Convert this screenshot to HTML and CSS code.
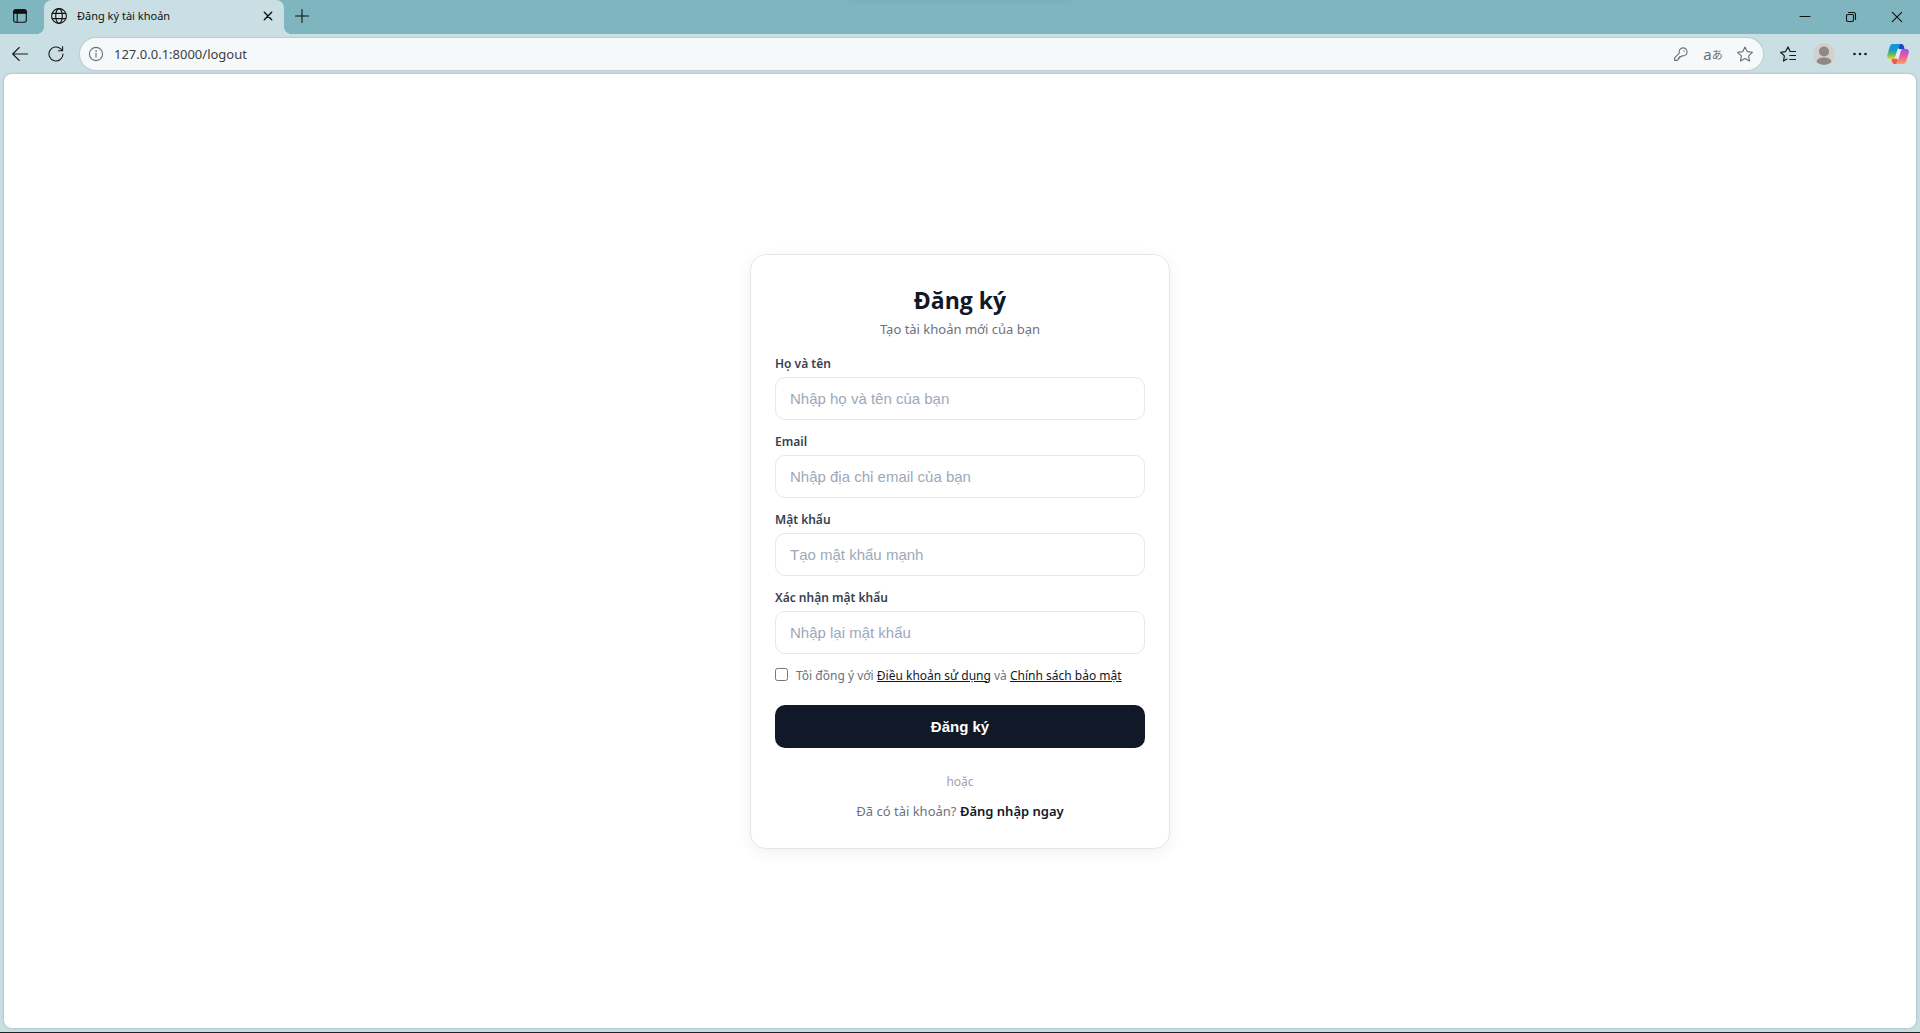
FILE: index.html
```html
<!DOCTYPE html>
<html lang="vi">
<head>
<meta charset="utf-8">
<meta name="viewport" content="width=device-width, initial-scale=1">
<title>Đăng ký tài khoản</title>
<link rel="stylesheet" href="styles.css">
</head>
<body>
<div class="browser">
  <header class="tab-strip">
    <button class="tab-actions" type="button" aria-label="Tab actions">
      <svg class="icon" viewBox="0 0 16 16"><rect x="1.7" y="1.7" width="12.6" height="12.6" rx="2.2"/><path d="M1.7 5.2V3.9a2.2 2.2 0 0 1 2.2-2.2h8.200a2.200 2.200 0 0 1 2.200 2.200v1.300z" fill="currentColor"/><path d="M5.200 5v9"/></svg>
    </button>
    <div class="tab">
      <svg class="icon" viewBox="0 0 16 16"><circle cx="8" cy="8" r="7.400"/><ellipse cx="8" cy="8" rx="3.300" ry="7.400"/><path d="M1.200 5.400h13.600M1.200 10.600h13.600"/></svg>
      <span class="tab-title">Đăng ký tài khoản</span>
      <button class="tab-close" type="button" aria-label="Close tab">
        <svg class="icon" viewBox="0 0 16 16"><path d="M4.300 4.300l7.400 7.400M11.700 4.300l-7.400 7.400" stroke-width="1.400"/></svg>
      </button>
    </div>
    <button class="tool" type="button" aria-label="New tab">
      <svg class="icon" viewBox="0 0 16 16"><path d="M8 1.500v13M1.500 8h13"/></svg>
    </button>
    <div class="window-controls">
      <button class="window-button" type="button" aria-label="Minimize"><svg class="icon" viewBox="0 0 16 16"><path d="M3 7.500h10"/></svg></button>
      <button class="window-button" type="button" aria-label="Restore"><svg class="icon" viewBox="0 0 16 16"><rect x="3.500" y="5.500" width="7" height="7" rx="1.200"/><path d="M5.500 3.500h5a2 2 0 0 1 2 2v5"/></svg></button>
      <button class="window-button" type="button" aria-label="Close"><svg class="icon" viewBox="0 0 16 16"><path d="M3.300 3.300l9.400 9.400M12.700 3.300l-9.400 9.400"/></svg></button>
    </div>
  </header>
  <nav class="toolbar">
    <button class="tool" type="button" aria-label="Back"><svg class="icon" viewBox="0 0 16 16"><path d="M15.500 8H.7M7.300 1.500L.7 8l6.600 6.500"/></svg></button>
    <button class="tool" type="button" aria-label="Refresh"><svg class="icon" viewBox="0 0 16 16"><path d="M15 8a7 7 0 1 1-2.200-5.100L14.600 4.600M14.600.6v4.200h-4.200"/></svg></button>
    <div class="address">
      <svg class="icon muted" viewBox="0 0 16 16"><circle cx="8" cy="8" r="6.600"/><path d="M8 7.200v3.900"/><circle cx="8" cy="5" r=".5" fill="currentColor" stroke-width=".5"/></svg>
      <input class="url" type="text" value="127.0.0.1:8000/logout" aria-label="Address">
      <button class="tool muted" type="button" aria-label="Passwords"><svg class="icon" viewBox="0 0 16 16"><path d="M6.300 7.100A4 4 0 1 1 9 9.700l-.9.900H6.700v1.500H5.300v1.300l-1 1H1.600v-2.500z"/><circle cx="11" cy="5" r=".7" fill="currentColor" stroke="none"/></svg></button>
      <button class="tool muted translate" type="button" aria-label="Translate"><span class="latin">a</span><span class="kana">あ</span></button>
      <button class="tool muted" type="button" aria-label="Add to favorites"><svg class="icon" viewBox="0 0 16 16"><path d="M8 .9l2.200 4.700 5.200.7-3.800 3.600.9 5.200L8 12.600l-4.500 2.500.9-5.200L.6 6.300l5.200-.7z"/></svg></button>
    </div>
    <button class="tool" type="button" aria-label="Favorites"><svg class="icon" viewBox="0 0 16 16"><path d="M15.500 5.500h-5.300L8 .9 5.600 5.600l-5 .7 3.800 3.600-.9 5.200L7 13M9.800 9.500h5.700M9.800 13.500h5.700" stroke-width="1.200"/></svg></button>
    <button class="tool" type="button" aria-label="Profile"><svg class="avatar" viewBox="0 0 22 22"><circle cx="11" cy="11" r="11" fill="#d3d0ce"/><circle cx="11" cy="8.500" r="5.100" fill="#8f8986"/><path d="M3.500 19c.5-3.300 3.500-4.500 7.500-4.500s7 1.200 7.500 4.500A11 11 0 0 1 3.500 19z" fill="#8f8986"/></svg></button>
    <button class="tool" type="button" aria-label="Settings and more"><svg class="icon" viewBox="0 0 16 16"><g fill="currentColor" stroke="none"><circle cx="2.500" cy="8" r="1.300"/><circle cx="8" cy="8" r="1.300"/><circle cx="13.500" cy="8" r="1.300"/></g></svg></button>
    <button class="tool copilot" type="button" aria-label="Copilot">
      <svg class="avatar" viewBox="0 0 22 22">
        <defs>
          <linearGradient id="cool" x1="0" y1="0" x2="0" y2="1"><stop offset="0" stop-color="#1590e8"/><stop offset=".4" stop-color="#149cc8"/><stop offset=".7" stop-color="#62bd63"/><stop offset="1" stop-color="#f2d51c"/></linearGradient>
          <linearGradient id="warm" x1="0" y1="0" x2="0" y2="1"><stop offset="0" stop-color="#a64cf0"/><stop offset=".5" stop-color="#ee5b9b"/><stop offset="1" stop-color="#ffa35f"/></linearGradient>
        </defs>
        <path d="M10 1h4.500q1.700 0 2.200 1.700L17.700 6.500h-5.700z" fill="#1749c4"/>
        <path d="M12 21H7.500q-1.700 0-2.200-1.700L4.300 15.500H10z" fill="#f15a3b"/>
        <path d="M5.500 1h6.300q1.400 0 .9 1.500Q11.200 4 10.500 6.500L8.600 13Q7.800 16 5.500 16H3Q-.5 16 .3 12L3 3Q3.600 1 5.500 1z" fill="url(#cool)"/>
        <path d="M16.500 21h-6.300q-1.400 0-.9-1.500Q10.800 18 11.500 15.500L13.400 9Q14.200 6 16.500 6H19q3.500 0 2.700 4L19 19q-.6 2-2.500 2z" fill="url(#warm)"/>
        <path d="M10.800 6.200h4.100q-1 .8-1.500 2.800L11.600 15.500h-4.500q1-.5 1.500-2.500z" fill="#e3ecf3"/>
      </svg>
    </button>
  </nav>
  <main class="page">
    <form class="card">
      <h1 class="heading">Đăng ký</h1>
      <p class="subtitle">Tạo tài khoản mới của bạn</p>
      <div class="field">
        <label class="label" for="name">Họ và tên</label>
        <input class="input" id="name" type="text" placeholder="Nhập họ và tên của bạn">
      </div>
      <div class="field">
        <label class="label" for="email">Email</label>
        <input class="input" id="email" type="email" placeholder="Nhập địa chỉ email của bạn">
      </div>
      <div class="field">
        <label class="label" for="password">Mật khẩu</label>
        <input class="input" id="password" type="password" placeholder="Tạo mật khẩu mạnh">
      </div>
      <div class="field">
        <label class="label" for="confirm">Xác nhận mật khẩu</label>
        <input class="input" id="confirm" type="password" placeholder="Nhập lại mật khẩu">
      </div>
      <div class="terms">
        <input class="checkbox" id="terms" type="checkbox">
        <label for="terms">Tôi đồng ý với <a class="terms-link" href="#terms-of-use">Điều khoản sử dụng</a> và <a class="terms-link" href="#privacy">Chính sách bảo mật</a></label>
      </div>
      <button class="submit" type="submit">Đăng ký</button>
      <p class="divider">hoặc</p>
      <p class="login">Đã có tài khoản? <a class="login-link" href="#login">Đăng nhập ngay</a></p>
    </form>
  </main>
</div>
</body>
</html>
```

FILE: styles.css
```css
*,
*::before,
*::after {
  box-sizing: border-box;
}

body {
  margin: 0;
  font-family: "Noto Sans", "Open Sans", sans-serif;
  font-size: 13px;
  line-height: 18px;
  color: #111827;
}

button,
input {
  margin: 0;
  padding: 0;
  border: 0;
  background: none;
  font: inherit;
  color: inherit;
}

/* Browser frame */

.browser {
  display: flex;
  flex-direction: column;
  min-height: 100vh;
  background: #c9dfe3;
  border-bottom: 1px solid #1c2426;
}

.icon {
  flex: none;
  width: 16px;
  height: 16px;
  fill: none;
  stroke: currentColor;
  stroke-width: 1.1;
  stroke-linecap: round;
  stroke-linejoin: round;
}

.tab-strip {
  position: relative;
  display: flex;
  align-items: stretch;
  height: 34px;
  background: #7eb5bf;
  color: #111;
  overflow: hidden;
}

.tab-strip::after {
  content: "";
  position: absolute;
  top: -14px;
  left: calc(50% - 108px);
  width: 216px;
  height: 10px;
  box-shadow: 0 0 10px rgba(60, 90, 110, 0.4);
}

.tab-actions {
  display: flex;
  align-items: center;
  justify-content: center;
  width: 40px;
  padding-bottom: 2px;
}

.tab {
  position: relative;
  display: flex;
  align-items: center;
  gap: 10px;
  width: 240px;
  margin: 0 2px 0 4px;
  padding: 0 8px 2px 7px;
  background: #c9dfe3;
  border-radius: 8px 8px 0 0;
}

.tab::before,
.tab::after {
  content: "";
  position: absolute;
  bottom: 0;
  width: 8px;
  height: 8px;
}

.tab::before {
  right: 100%;
  background: radial-gradient(circle at 0 0, transparent 8px, #c9dfe3 8px);
}

.tab::after {
  left: 100%;
  background: radial-gradient(circle at 100% 0, transparent 8px, #c9dfe3 8px);
}

.tab-title {
  flex: 1;
  font-size: 11px;
}

.tab-close {
  display: flex;
}

.tool {
  flex: none;
  display: flex;
  align-items: center;
  justify-content: center;
  width: 32px;
  height: 32px;
}

.window-controls {
  display: flex;
  margin-left: auto;
}

.window-button {
  display: flex;
  align-items: center;
  justify-content: center;
  width: 46px;
}

.toolbar {
  display: flex;
  align-items: center;
  gap: 4px;
  height: 40px;
  padding: 0 4px;
  color: #1b1b1b;
}

.address {
  flex: 1;
  display: flex;
  align-items: center;
  height: 32px;
  margin: 0 5px 0 4px;
  padding: 0 2px 0 8px;
  background: #f5f9fa;
  border-radius: 16px;
  box-shadow: 0 0 1px 1px #bfcccf;
}

.url {
  flex: 1;
  min-width: 0;
  padding: 0 10px;
  font-size: 13px;
  color: #3c4043;
  outline: none;
}

.muted {
  color: #6b6f72;
}

.translate {
  line-height: 16px;
}

.latin {
  font-size: 15px;
}

.kana {
  font-family: "Noto Sans CJK JP", sans-serif;
  font-size: 11px;
}

.avatar {
  width: 22px;
  height: 22px;
}

.copilot {
  width: 36px;
}

/* Sign-up page */

.page {
  flex: 1;
  display: flex;
  align-items: center;
  justify-content: center;
  margin: 0 4px 4px;
  background: #fff;
  border-radius: 8px;
  box-shadow: 0 0 2px 1px #b2c8cd;
}

.card {
  width: 100%;
  max-width: 420px;
  padding: 28px 24px;
  border: 1px solid #e5e7eb;
  border-radius: 16px;
  background: #fff;
  box-shadow: 0 4px 16px rgba(0, 0, 0, 0.06);
}

.heading {
  margin: 0 0 2px;
  font-family: "Open Sans", "Noto Sans", sans-serif;
  font-size: 23px;
  line-height: 34px;
  font-weight: 700;
  text-align: center;
}

.subtitle {
  margin: 0 0 16px;
  line-height: 20px;
  color: #6b7280;
  text-align: center;
}

.field {
  display: flex;
  flex-direction: column;
  gap: 4px;
  margin-bottom: 13px;
}

.label {
  font-size: 12px;
  font-weight: 600;
  color: #374151;
}

.input {
  width: 100%;
  height: 43px;
  padding: 0 14px;
  border: 1px solid #e5e7eb;
  border-radius: 10px;
  font-family: "Liberation Sans", Arial, sans-serif;
  font-size: 15px;
}

.input::placeholder {
  color: #9ca9ba;
}

.terms {
  display: flex;
  gap: 8px;
  margin-bottom: 20px;
  font-size: 12px;
  color: #6b7280;
}

.checkbox {
  flex: none;
  width: 13px;
  height: 13px;
  margin-top: 1px;
}

.terms-link {
  color: #111827;
  text-decoration: underline;
}

.submit {
  display: block;
  width: 100%;
  height: 43px;
  padding-top: 1px;
  border-radius: 10px;
  background: #111827;
  color: #fff;
  font-family: "Liberation Sans", Arial, sans-serif;
  font-size: 15px;
  font-weight: 700;
}

.divider {
  margin: 25px 0 11px;
  font-size: 12px;
  color: #9ca3af;
  text-align: center;
}

.login {
  margin: 0;
  color: #6b7280;
  text-align: center;
}

.login-link {
  color: #111827;
  font-weight: 600;
  text-decoration: none;
}
```
